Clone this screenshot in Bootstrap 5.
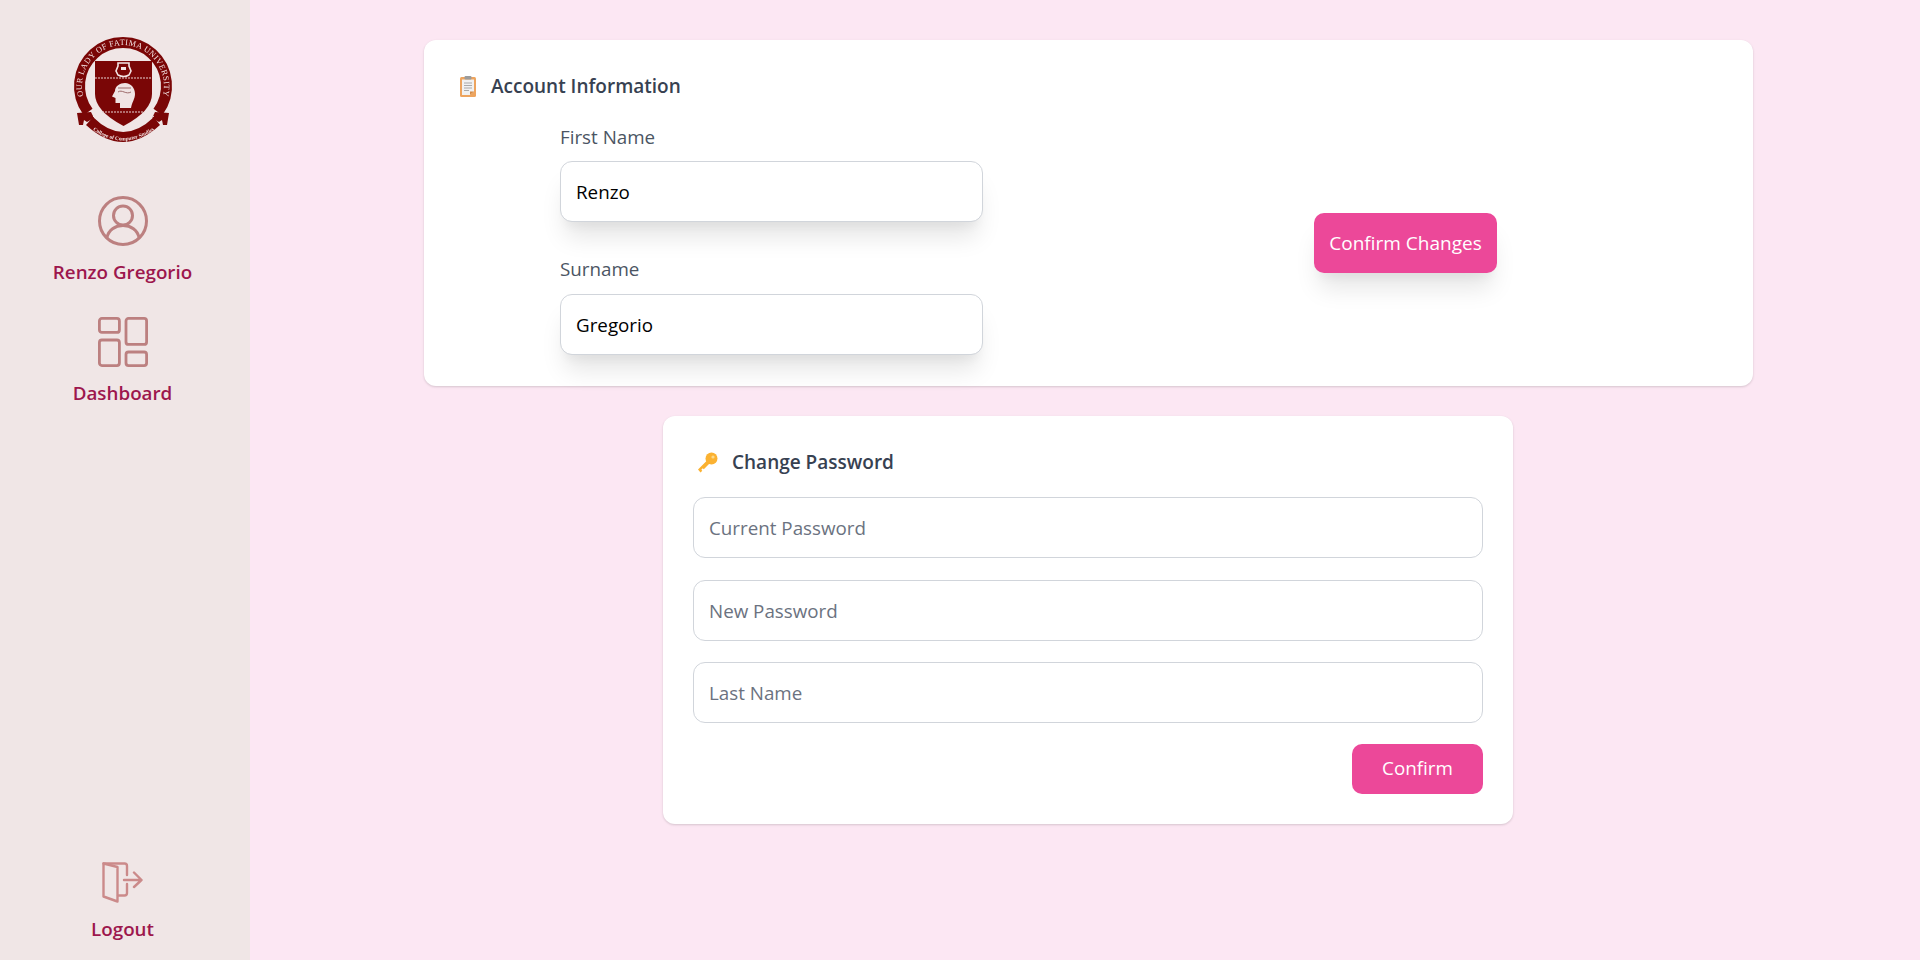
<!DOCTYPE html>
<html lang="en"><head><meta charset="utf-8"><title>Account</title>
<link href="https://cdn.jsdelivr.net/npm/bootstrap@5.3.0/dist/css/bootstrap.min.css" rel="stylesheet">
<style>
html,body{height:100%}
body{background:#fce7f3;font-family:"Open Sans","Noto Sans",sans-serif;overflow:hidden}
.shell{height:960px}
.sidebar{width:250px;flex:none;background:#f0e6e6;height:960px;padding:36px 5px 17px 0}
.side-link{color:#9d174d;font-size:18.8px;font-weight:600;line-height:27px;text-decoration:none}
.side-link span{margin-top:13px}
.side-ico{display:block;color:#bc8080}
.link-user{margin-top:52px}
.link-dash{margin-top:31px}
.logo-svg{width:104px;height:108px;display:block;filter:blur(.35px)}
.content-area{flex:1;padding:40px 167px 0 174px}
.panel{background:#fff;border-radius:12px;box-shadow:0 1px 3px rgba(0,0,0,.1),0 1px 2px rgba(0,0,0,.06)}
.panel-a{padding:33px 36px 30px;height:346px}
.panel-b{width:850px;margin:30px 0 0 239px;padding:33px 30px 30px;height:408px}
.panel-title{font-size:19px;font-weight:600;color:#374151;line-height:27px}
.title-a{gap:15px}
.title-b{gap:14px;padding-left:4px}
.form-area{width:423px;margin:24px 0 0 100px}
.field-label{font-size:18.8px;line-height:26px;color:#4b5563;margin:0 0 11px;display:block}
.field-gap{margin-top:34px;margin-bottom:12px}
.pink-input{height:61px;border:1px solid #d1d5db;border-radius:12px;font-size:18.8px;padding:1px 15px 0;color:#000}
.pink-input::placeholder{color:#6b7280;opacity:1}
.pink-input:focus{border-color:#d1d5db;box-shadow:none}
.raised{box-shadow:0 20px 25px -5px rgba(0,0,0,.1),0 10px 10px -5px rgba(0,0,0,.04)}
.btn-rose{background:#ec4899;border:0;color:#fff;font-size:18.8px;border-radius:10px}
.btn-rose:hover,.btn-rose:active{background:#ec4899!important;color:#fff!important}
.btn-changes{width:183px;height:60px;padding:0;font-size:19px;box-shadow:0 20px 25px -5px rgba(0,0,0,.1),0 10px 10px -5px rgba(0,0,0,.04)}
.btn-ok{width:131px;height:50px;padding:0}
.ok-row{margin-top:-1px}
.changes-col{margin-left:331px;padding-top:113px}
.stack-form{gap:21.5px;margin-top:21px}
</style></head>
<body>
<div class="d-flex shell">
<nav class="sidebar d-flex flex-column align-items-center">
  <svg class="logo-svg" viewBox="0 0 104 108" role="img" aria-label="University seal">
    <defs>
      <path id="arcTop" d="M13.100 63 A41 41 0 1 1 90.900 63"/>
      <path id="arcBottom" d="M19 92 Q52 117 86 92"/>
    </defs>
    <path d="M17.100 76A43.500 43.500 0 1 1 86.900 76" fill="none" stroke="#7a0606" stroke-width="11"/>
    <path d="M24 25H81V58Q81 75 52.500 90Q24 75 24 58Z" fill="#7a0606"/>
    <path d="M24 42H81M31 76H74" stroke="#e8d4d4" stroke-width="1.200" stroke-dasharray="2 1"/>
    <path d="M47 27h11v3l2 5-2 4q-5 3-11 0l-2-4 2-5z" fill="none" stroke="#f4e6e6" stroke-width="1.600"/>
    <path d="M50 31h5v3h-5z" fill="#f4e6e6"/>
    <path d="M49 72V67H44.500V62L41 60.500L44 55C44 50 49 47 54 47C60 47 64 52 64 58C64 63 61 66 60 72Z" fill="#f0e4e4"/>
    <path d="M47 52h13M47 56c4-3 8 3 13 0" fill="none" stroke="#9d6a6a" stroke-width="1"/>
    <path d="M6 77l14-1 3 6-7 4-3-2-1 5-4 0z" fill="#7a0606"/>
    <path d="M98 77l-14-1-3 6 7 4 3-2 1 5 4 0z" fill="#7a0606"/>
    <path d="M15 89L22 81Q52 111 83 81L89 89Q52 123 15 89Z" fill="#7a0606"/>
    <path d="M22 80Q52 104 83 80" fill="none" stroke="#f0e6e6" stroke-width="1"/>
    <text font-family="Liberation Serif,serif" font-size="8.200" fill="#f4e4e4" letter-spacing=".4"><textPath href="#arcTop" startOffset="50%" text-anchor="middle">OUR LADY OF FATIMA UNIVERSITY</textPath></text>
    <text font-family="Liberation Serif,serif" font-size="5.400" font-weight="700" fill="#f4e4e4"><textPath href="#arcBottom" startOffset="50%" text-anchor="middle">College of Computer Studies</textPath></text>
  </svg>
  <a href="#" class="side-link link-user d-flex flex-column align-items-center">
    <svg class="side-ico" width="50" height="50" viewBox="0 0 50 50" fill="none" stroke="currentColor" stroke-width="3"><circle cx="25" cy="25" r="23.500"/><circle cx="25" cy="19.500" r="9.500"/><path d="M9 41.500C10.500 34 17 29.500 25 29.500s14.500 4.500 16 12"/></svg>
    <span>Renzo Gregorio</span>
  </a>
  <a href="#" class="side-link link-dash d-flex flex-column align-items-center">
    <svg class="side-ico" width="50" height="50" viewBox="0 0 50 50" fill="none" stroke="currentColor" stroke-width="2.800"><rect x="1.400" y="1.400" width="20" height="14" rx="2.500"/><rect x="28" y="1.400" width="20.600" height="26" rx="2.500"/><rect x="1.400" y="23" width="20" height="25.600" rx="2.500"/><rect x="28" y="35" width="20.600" height="13.600" rx="2.500"/></svg>
    <span>Dashboard</span>
  </a>
  <a href="#" class="side-link d-flex flex-column align-items-center mt-auto">
    <svg class="side-ico" width="41" height="41" viewBox="0 0 41 41" fill="none" stroke="#cb8a8a" stroke-width="2.400" stroke-linejoin="round" stroke-linecap="round"><path d="M1.500 1.500H22.500a2.500 2.500 0 0 1 2.500 2.500V13M25 22v9a2.500 2.500 0 0 1-2.500 2.500H16"/><path d="M1.500 1.500L15.500 5V39.500L1.500 34.500z"/><path d="M22 18H39.500M32 10.500L39.500 18L32 25"/></svg>
    <span>Logout</span>
  </a>
</nav>
<main class="content-area">
  <section class="panel panel-a">
    <div class="panel-title title-a d-flex align-items-center">
      <svg width="16" height="21" viewBox="0 0 16 21"><rect x="0" y="1" width="16" height="20" rx="1.500" fill="#eda45e"/><path d="M2 3.500h12v12l-4 3.500H2z" fill="#f1f1f1"/><path d="M14 15.500l-4 3.500v-3.500z" fill="#d58a44"/><rect x="4.500" y="0" width="7" height="3.500" rx="1" fill="#9c9c9c"/><path d="M4 7h8M4 9.500h8M4 12h8M4 14.500h5" stroke="#a9a9a9" stroke-width="1.100"/></svg>
      <h2 class="panel-title m-0">Account Information</h2>
    </div>
    <div class="d-flex">
      <form class="form-area" onsubmit="return false">
        <label class="field-label" for="fn">First Name</label>
        <input id="fn" class="form-control pink-input raised" value="Renzo">
        <label class="field-label field-gap" for="sn">Surname</label>
        <input id="sn" class="form-control pink-input raised" value="Gregorio">
      </form>
      <div class="changes-col"><button class="btn btn-rose btn-changes" type="button">Confirm Changes</button></div>
    </div>
  </section>
  <section class="panel panel-b">
    <div class="panel-title title-b d-flex align-items-center">
      <svg width="21" height="21" viewBox="0 0 21 21"><circle cx="14.500" cy="6.500" r="6" fill="#fbb232"/><path d="M10 8.500L1 17.500 3.500 20.500l1.800-1.800-1-1 1.500-1.500 1 1L13 11z" fill="#fbb232"/><circle cx="16" cy="5" r="1.600" fill="#fdd98a"/></svg>
      <h2 class="panel-title m-0">Change Password</h2>
    </div>
    <form class="stack-form d-flex flex-column" onsubmit="return false">
      <input class="form-control pink-input" type="password" placeholder="Current Password" aria-label="Current Password">
      <input class="form-control pink-input" type="password" placeholder="New Password" aria-label="New Password">
      <input class="form-control pink-input" type="text" placeholder="Last Name" aria-label="Last Name">
      <div class="ok-row d-flex justify-content-end"><button class="btn btn-rose btn-ok" type="button">Confirm</button></div>
    </form>
  </section>
</main>
</div>
<script src="https://cdn.jsdelivr.net/npm/bootstrap@5.3.0/dist/js/bootstrap.bundle.min.js"></script>
</body></html>
